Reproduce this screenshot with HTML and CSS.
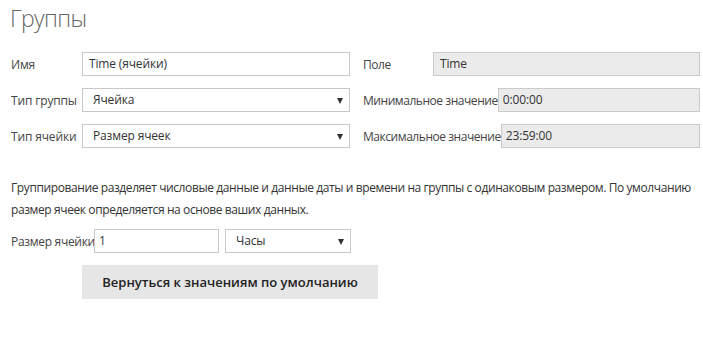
FILE: index.html
```html
<!DOCTYPE html>
<html lang="ru">
<head>
<meta charset="utf-8">
<link rel="stylesheet" href="styles.css">
</head>
<body>
<div class="page">
  <h1 class="title">Группы</h1>
  <div class="grid">
    <div class="row">
      <span class="label">Имя</span>
      <div class="field">Time (ячейки)</div>
    </div>
    <div class="row right">
      <span class="label">Поле</span>
      <div class="field disabled">Time</div>
    </div>
    <div class="row">
      <span class="label">Тип группы</span>
      <div class="field select">Ячейка</div>
    </div>
    <div class="row right">
      <span class="label">Минимальное значение</span>
      <div class="field disabled tight">0:00:00</div>
    </div>
    <div class="row">
      <span class="label">Тип ячейки</span>
      <div class="field select">Размер ячеек</div>
    </div>
    <div class="row right">
      <span class="label">Максимальное значение</span>
      <div class="field disabled tight">23:59:00</div>
    </div>
  </div>
  <p class="desc">Группирование разделяет числовые данные и данные даты и времени на группы с одинаковым размером. По умолчанию размер ячеек определяется на основе ваших данных.</p>
  <div class="size-row">
    <span class="label auto">Размер ячейки</span>
    <div class="field size-input tight">1</div>
    <div class="field select size-select">Часы</div>
  </div>
  <div class="btn-row">
    <button class="btn">Вернуться к значениям по умолчанию</button>
  </div>
</div>
</body>
</html>
```
FILE: styles.css
```css
html, body {
  margin: 0;
  padding: 0;
  background: #fff;
}
body {
  font-family: "Open Sans", "Noto Sans", sans-serif;
  font-size: 12px;
  letter-spacing: -0.15px;
  color: #333;
}
.page {
  padding: 0 3px 0 11px;
}
.title {
  margin: 0 0 0 -1px;
  padding-top: 2px;
  height: 40px;
  font-size: 23px;
  letter-spacing: -0.6px;
  font-weight: 300;
  color: #666;
  line-height: 32px;
}
.grid {
  margin-top: 10px;
  display: grid;
  grid-template-columns: 339px 337px;
  column-gap: 13px;
  row-gap: 12px;
}
.row {
  display: flex;
  align-items: center;
  height: 24px;
}
.label {
  flex-shrink: 0;
  min-width: 71px;
  color: #444;
  white-space: nowrap;
}
.right .label {
  min-width: 70px;
  letter-spacing: -0.45px;
}
.label.auto {
  min-width: 0;
  width: 83px;
  letter-spacing: -0.3px;
  overflow: visible;
}
.field {
  flex: 1;
  box-sizing: border-box;
  height: 24px;
  line-height: 22px;
  border: 1px solid #c8c8c8;
  background: #fff;
  padding: 0 6px;
  color: #333;
  white-space: nowrap;
  position: relative;
}
.field.tight {
  padding-left: 4px;
}
.field.disabled {
  background: #ebebeb;
  border-color: #cacaca;
}
.field.select {
  padding-left: 10px;
}
.field.select::after {
  content: "";
  position: absolute;
  right: 6px;
  top: 9px;
  border-left: 3.5px solid transparent;
  border-right: 3.5px solid transparent;
  border-top: 6px solid #333;
}
.desc {
  margin: 29px 0 0;
  line-height: 22px;
  letter-spacing: -0.4px;
  color: #333;
}
.size-row {
  margin-top: 8px;
  display: flex;
  align-items: center;
  height: 24px;
}
.size-input {
  flex: 0 0 125px;
}
.size-select {
  flex: 0 0 126px;
  margin-left: 6px;
}
.btn-row {
  margin-top: 12px;
  padding-left: 71px;
}
.btn {
  width: 296px;
  height: 34px;
  border: none;
  background: #e6e6e6;
  font-family: inherit;
  font-size: 13px;
  letter-spacing: 0;
  font-weight: 600;
  color: #222;
  padding: 0;
}
```
